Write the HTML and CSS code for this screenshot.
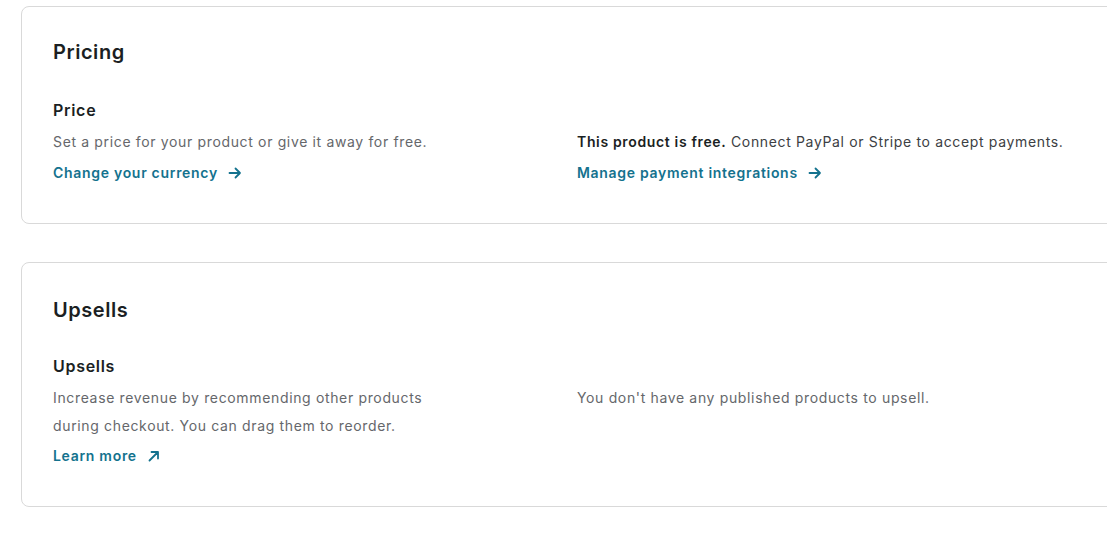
FILE: index.html
```html
<!DOCTYPE html>
<html lang="en">
<head>
<meta charset="utf-8">
<title>Pricing</title>
<link rel="stylesheet" href="styles.css">
</head>
<body>
<main class="page">
  <section class="card card-pricing">
    <h2 class="card-title">Pricing</h2>
    <div class="row">
      <div class="col">
        <h3 class="sub-title">Price</h3>
        <p class="desc">Set a price for your product or give it away for free.</p>
        <a class="link" href="#">Change your currency
          <svg class="icon" viewBox="0 0 16 16" width="16" height="16" aria-hidden="true"><path d="M2.5 8h10.5M8.5 3.5 13 8l-4.5 4.5" fill="none" stroke="currentColor" stroke-width="1.8" stroke-linecap="round" stroke-linejoin="round"/></svg>
        </a>
      </div>
      <div class="col col-right">
        <p class="desc desc-dark"><strong>This product is free.</strong> Connect PayPal or Stripe to accept payments.</p>
        <a class="link" href="#">Manage payment integrations
          <svg class="icon" viewBox="0 0 16 16" width="16" height="16" aria-hidden="true"><path d="M2.5 8h10.5M8.5 3.5 13 8l-4.5 4.5" fill="none" stroke="currentColor" stroke-width="1.8" stroke-linecap="round" stroke-linejoin="round"/></svg>
        </a>
      </div>
    </div>
  </section>

  <section class="card card-upsells">
    <h2 class="card-title">Upsells</h2>
    <div class="row">
      <div class="col">
        <h3 class="sub-title">Upsells</h3>
        <p class="desc desc-narrow">Increase revenue by recommending other products during checkout. You can drag them to reorder.</p>
        <a class="link" href="#">Learn more
          <svg class="icon" viewBox="0 0 16 16" width="16" height="16" aria-hidden="true"><path d="M3.5 12.5 12 4M5.5 4H12v6.5" fill="none" stroke="currentColor" stroke-width="1.8" stroke-linecap="round" stroke-linejoin="round"/></svg>
        </a>
      </div>
      <div class="col col-right">
        <p class="desc">You don't have any published products to upsell.</p>
      </div>
    </div>
  </section>
</main>
</body>
</html>
```
FILE: styles.css
```css
html, body {
  margin: 0;
  padding: 0;
  background: #ffffff;
  overflow: hidden;
}
body {
  font-family: Inter, "Noto Sans", sans-serif;
  color: #1b1f23;
}
.page {
  padding: 6px 0 0 21px;
  display: flex;
  flex-direction: column;
  gap: 38px;
}
.card {
  width: 1120px;
  box-sizing: border-box;
  border: 1px solid #d9d9d9;
  border-radius: 8px;
  padding: 30px 31px 36px;
  background: #fff;
}
.card-title {
  margin: 0 0 31px;
  font-size: 20px;
  line-height: 30px;
  font-weight: 600;
  letter-spacing: 0.55px;
  color: #1b1f23;
}
.card-upsells .card-title {
  padding-top: 2px;
  margin-bottom: 29px;
}
.row {
  display: grid;
  grid-template-columns: 492px 1fr;
  column-gap: 32px;
}
.col-right {
  padding-top: 30px;
}
.sub-title {
  margin: 0 0 6px;
  font-size: 16px;
  line-height: 24px;
  font-weight: 600;
  letter-spacing: 0.7px;
  color: #1b1f23;
}
.desc {
  margin: 0 0 3px;
  font-size: 14px;
  line-height: 28px;
  letter-spacing: 0.65px;
  color: #65676b;
}
.desc-narrow {
  max-width: 400px;
  margin-bottom: 2px;
}
.desc-dark {
  color: #3c4043;
}
.desc-dark strong {
  color: #1b1f23;
  font-weight: 600;
}
.link {
  display: inline-flex;
  align-items: center;
  gap: 9px;
  font-size: 14px;
  line-height: 28px;
  font-weight: 600;
  letter-spacing: 0.7px;
  color: #14728e;
  text-decoration: none;
}
.icon {
  width: 16px;
  height: 16px;
  flex: none;
}
```
